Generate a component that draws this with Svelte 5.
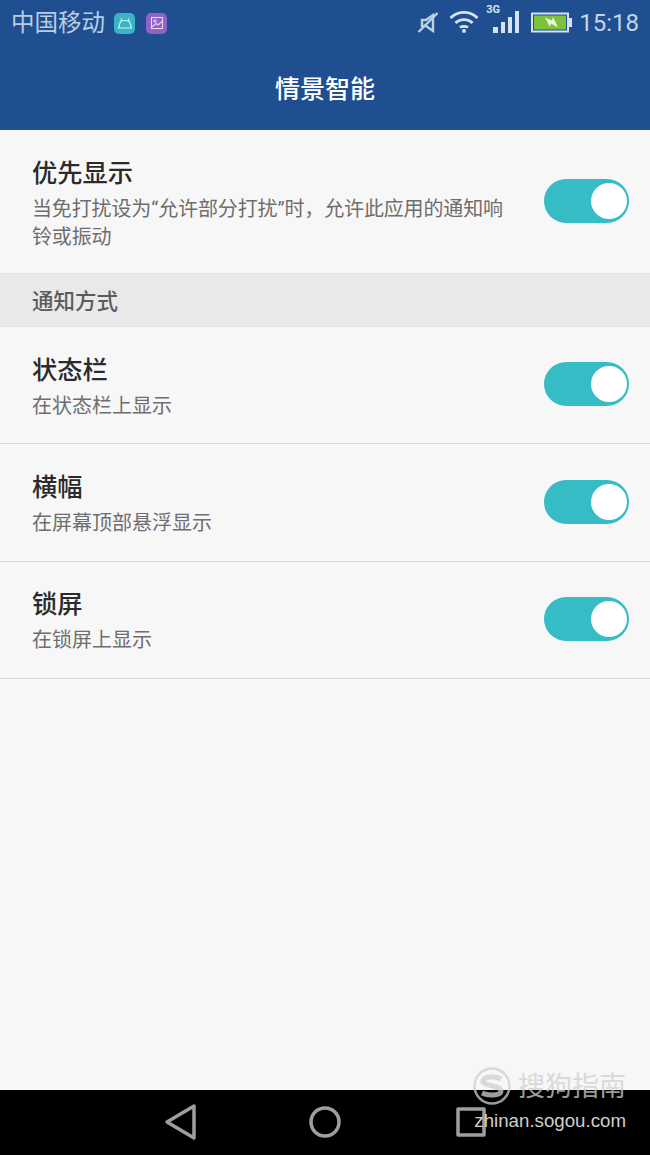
<script>
  const rows = [
    { title: '状态栏', desc: '在状态栏上显示' },
    { title: '横幅', desc: '在屏幕顶部悬浮显示' },
    { title: '锁屏', desc: '在锁屏上显示' },
  ];
</script>

<div class="page">
  <header class="appbar">
    <div class="status">
      <span class="carrier">中国移动</span>
      <span class="notif teal">
        <svg viewBox="0 0 20 20" width="20" height="20" fill="none" stroke="#d8f2f4" stroke-width="1.1">
          <path d="M3.500 15 L5.500 8.500 Q10 6.500 14.500 8.500 L16.500 15 Z" />
          <path d="M6 5.500 L7 8 M14 5.500 L13 8" />
        </svg>
      </span>
      <span class="notif purple">
        <svg viewBox="0 0 20 20" width="20" height="20" fill="none" stroke="#e6d8f6" stroke-width="1.1">
          <rect x="4.500" y="4.500" width="11" height="11" />
          <path d="M4.500 14 L9.500 10.500 L11 12 L15.500 8" />
          <circle cx="8" cy="8" r="1.200" />
        </svg>
      </span>
      <span class="spacer"></span>
      <svg class="ico mute" viewBox="0 0 24 24" width="24" height="24" fill="none" stroke="#bcd0e6" stroke-width="2.400">
        <path d="M6 9 H10 L17 4 V20 L10 15 H6 Z" />
        <path d="M2.500 21 L21.500 2" />
      </svg>
      <svg class="ico wifi" viewBox="0 0 30 24" width="30" height="24" fill="none" stroke="#d6e2f0" stroke-width="2.800">
        <path d="M1.500 7 C9 -0.500 21 -0.500 28.500 7" />
        <path d="M6.500 12 C11 7.500 19 7.500 23.500 12" />
        <path d="M11 16.500 C13 15 17 15 19 16.500" />
        <circle cx="15" cy="20" r="2" fill="#d6e2f0" stroke="none" />
      </svg>
      <span class="signal">
        <span class="net">3G</span>
        <svg viewBox="0 0 28 24" width="28" height="24" fill="#d6e2f0">
          <rect x="1" y="16" width="5" height="6" />
          <rect x="9" y="11" width="4" height="11" />
          <rect x="16" y="6" width="4" height="16" />
          <rect x="23" y="0" width="4" height="22" />
        </svg>
      </span>
      <svg class="ico batt" viewBox="0 0 41 22" width="41" height="22">
        <rect x="1" y="1.500" width="36" height="18" fill="#1f4f90" stroke="#d6e2f0" stroke-width="2" />
        <rect x="3" y="3.500" width="32" height="14" fill="#7cc23a" />
        <rect x="38" y="6" width="3" height="9" fill="#d6e2f0" />
        <path d="M14 5.500 L21 8.500 L22 5 L27 15.500 L20 11.500 L19 15 Z" fill="#eef6de" />
      </svg>
      <span class="clock">15:18</span>
    </div>
    <h1>情景智能</h1>
  </header>

  <section class="row first">
    <div class="text">
      <div class="title">优先显示</div>
      <div class="desc">当免打扰设为“允许部分打扰”时，允许此应用的通知响铃或振动</div>
    </div>
    <span class="toggle"><span class="knob"></span></span>
  </section>

  <div class="group">通知方式</div>

  {#each rows as row}
    <section class="row">
      <div class="text">
        <div class="title">{row.title}</div>
        <div class="desc">{row.desc}</div>
      </div>
      <span class="toggle"><span class="knob"></span></span>
    </section>
  {/each}

  <div class="fill"></div>

  <nav class="navbar">
    <svg viewBox="0 0 34 38" width="34" height="38" fill="none" stroke="#9e9e9e" stroke-width="3.500" stroke-linejoin="round">
      <path d="M30 3 V35 L3 19 Z" />
    </svg>
    <svg viewBox="0 0 34 34" width="34" height="34" fill="none" stroke="#9e9e9e" stroke-width="3.500">
      <circle cx="17" cy="17" r="14" />
    </svg>
    <svg viewBox="0 0 32 32" width="32" height="32" fill="none" stroke="#9e9e9e" stroke-width="3.500" stroke-linejoin="round">
      <rect x="3" y="3" width="26" height="26" />
    </svg>
  </nav>

  <div class="mark">
    <div class="mark-top">
      <svg viewBox="0 0 40 40" width="40" height="40" fill="none" stroke="#cfcfcf" stroke-width="2.500">
        <circle cx="20" cy="20" r="17.500" />
        <path d="M29 13 C24 10 12 10 11 15 C10 20 29 19 29 25 C29 30 16 30 10 27" stroke-width="5" />
      </svg>
      <span class="mark-name">搜狗指南</span>
    </div>
    <div class="mark-url">zhinan.sogou.com</div>
  </div>
</div>

<style>
  :global(body) {
    margin: 0;
    background: #f7f7f7;
  }

  .page {
    position: relative;
    width: 650px;
    height: 1155px;
    display: flex;
    flex-direction: column;
    overflow: hidden;
    background: #f7f7f7;
    font-family: "Roboto", "Noto Sans CJK SC", sans-serif;
  }

  /* ── header ──────────────────────────────────────────────────────────── */
  .appbar {
    height: 130px;
    flex-shrink: 0;
    background: #1f4f90;
    color: #fff;
  }

  .status {
    height: 46px;
    display: flex;
    align-items: center;
    padding: 0 11px;
    color: #b9cde4;
  }

  .carrier {
    font-size: 23.500px;
    line-height: 48px;
    margin-right: 9px;
  }

  .notif {
    width: 21px;
    height: 21px;
    border-radius: 5px;
    margin-right: 11px;
    display: flex;
    align-items: center;
    justify-content: center;
  }

  .teal { background: #38b5c4; }
  .purple { background: #9160c8; }

  .spacer { flex: 1; }

  .ico { flex-shrink: 0; }
  .mute { margin-right: 9px; }
  .wifi { margin-right: 13px; }

  .signal {
    position: relative;
    width: 28px;
    height: 24px;
    margin-right: 11px;
    flex-shrink: 0;
  }

  .net {
    position: absolute;
    left: -6px;
    top: -7px;
    font-size: 11px;
    font-weight: 700;
    line-height: 12px;
    color: #d6e2f0;
  }

  .clock {
    font-size: 24px;
    margin-left: 7px;
    margin-top: -1px;
    color: #c4d5e8;
  }

  h1 {
    margin: 0;
    font-size: 25px;
    font-weight: 500;
    line-height: 38px;
    padding-top: 25px;
    text-align: center;
  }

  /* ── rows ────────────────────────────────────────────────────────────── */
  .row {
    height: 116.400px;
    flex-shrink: 0;
    border-bottom: 1px solid #dcdcdc;
    display: flex;
    align-items: center;
    padding: 0 21px 0 32px;
  }

  .row.first {
    height: 143px;
    border-bottom: 1px solid #dedede;
  }

  .text {
    flex: 1;
    width: 0;
    padding-top: 3px;
  }

  .first .text { padding-top: 4px; }

  .title {
    font-size: 25.250px;
    font-weight: 500;
    line-height: 34px;
    color: #2b2b2b;
  }

  .desc {
    font-size: 20px;
    line-height: 28px;
    margin-top: 4px;
    color: #6e6e6e;
  }

  .first .desc {
    width: 476px;
    letter-spacing: -0.130px;
  }

  .toggle {
    width: 85px;
    height: 44px;
    margin-bottom: 2px;
    border-radius: 22px;
    background: #36bcc4;
    flex-shrink: 0;
    position: relative;
  }

  .knob {
    position: absolute;
    right: 2px;
    top: 4px;
    width: 36px;
    height: 36px;
    border-radius: 50%;
    background: #fff;
  }

  .group {
    height: 52px;
    flex-shrink: 0;
    border-bottom: 1px solid #dedede;
    background: #e9e9e9;
    padding-left: 32px;
    font-size: 21.500px;
    font-weight: 500;
    line-height: 55px;
    color: #5c5c5c;
  }

  .fill { flex: 1; }

  /* ── nav + watermark ─────────────────────────────────────────────────── */
  .navbar {
    height: 63px;
    padding-bottom: 2px;
    flex-shrink: 0;
    background: #000;
    display: flex;
    align-items: center;
    padding-left: 164px;
  }

  .navbar svg:nth-child(2) { margin-left: 110px; }
  .navbar svg:nth-child(3) { margin-left: 113px; }

  .mark {
    position: absolute;
    right: 24px;
    bottom: 22px;
    color: #cfcfcf;
    text-align: right;
  }

  .mark-top {
    display: flex;
    align-items: center;
    gap: 6px;
    font-size: 27px;
    line-height: 40px;
    opacity: 0.75;
    margin-bottom: 1px;
    position: relative;
    top: -1px;
  }

  .mark-name { padding-top: 3px; }

  .mark-url {
    font-family: "Liberation Sans", sans-serif;
    font-size: 18.700px;
    line-height: 24px;
  }
</style>
